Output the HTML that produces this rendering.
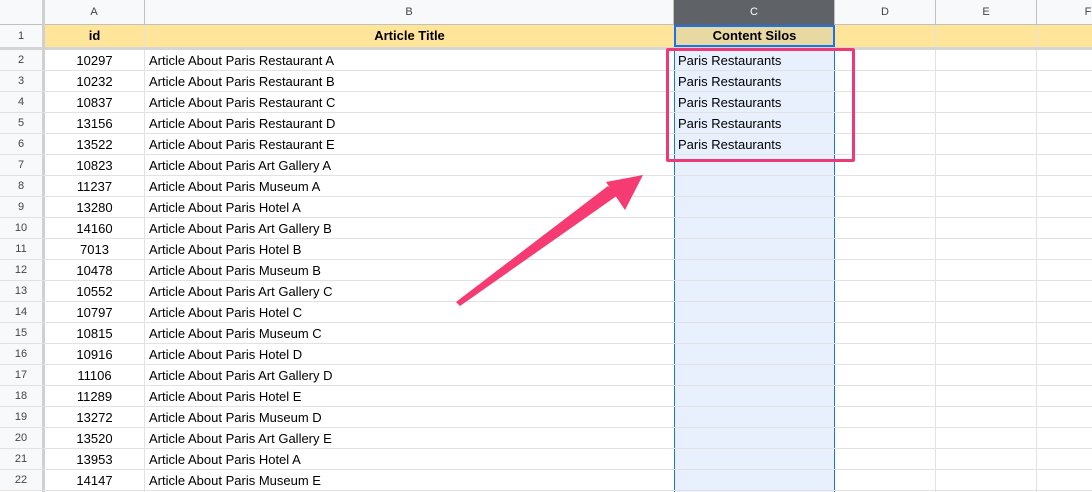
<!DOCTYPE html><html><head><style>
body{margin:0;width:1092px;height:492px;overflow:hidden;background:#fff;font-family:"Liberation Sans",Arial,sans-serif;position:relative}
.a{position:absolute;box-sizing:border-box}
.t{font-size:13px;color:#000;line-height:21px;white-space:nowrap}
.rh{font-size:11px;color:#444;text-align:center}
</style></head><body>
<div class="a" style="left:0;top:0;width:1092px;height:25px;background:#f8f9fa;border-bottom:1px solid #c0c0c0"></div>
<div class="a" style="left:674px;top:0;width:161px;height:25px;background:#5f6368"></div>
<div id="g"></div>
<script>
var h='';
var cols=[[44,145,'A'],[145,674,'B'],[674,835,'C'],[835,936,'D'],[936,1037,'E'],[1037,1140,'F']];
cols.forEach(function(c){h+='<div class="a rh" style="left:'+c[0]+'px;top:0;width:'+(c[1]-c[0])+'px;height:25px;line-height:25px;border-right:1px solid #c0c0c0;'+(c[2]=='C'?'color:#fff':'')+'">'+c[2]+'</div>';});
h+='<div class="a" style="left:44px;top:25px;width:1048px;height:22px;background:#ffe599"></div>';
h+='<div class="a" style="left:674px;top:25px;width:161px;height:22px;background:#e8d9a2;border:2px solid #1a73e8"></div>';
h+='<div class="a" style="left:0;top:25px;width:42px;height:22px;background:#f8f9fa"></div>';
h+='<div class="a rh" style="left:0;top:25px;width:42px;line-height:22px">1</div>';
[[44,145,'id'],[145,674,'Article Title'],[674,835,'Content Silos']].forEach(function(c){h+='<div class="a t" style="left:'+c[0]+'px;top:25px;width:'+(c[1]-c[0])+'px;line-height:22px;text-align:center;font-weight:bold">'+c[2]+'</div>';});
[145,936,1037].forEach(function(x){h+='<div class="a" style="left:'+(x-1)+'px;top:25px;width:1px;height:467px;background:#e2e2e2"></div>';});
h+='<div class="a" style="left:0;top:47px;width:1092px;height:3px;background:#d5d5d5"></div>';
h+='<div class="a" style="left:42px;top:0;width:3px;height:492px;background:#d0d0d0"></div>';
h+='<div class="a" style="left:674px;top:50px;width:161px;height:442px;background:#e8f0fe;border-left:1px solid #1a73e8;border-right:1px solid #1a73e8"></div>';
var d=[['10297','Restaurant A'],['10232','Restaurant B'],['10837','Restaurant C'],['13156','Restaurant D'],['13522','Restaurant E'],['10823','Art Gallery A'],['11237','Museum A'],['13280','Hotel A'],['14160','Art Gallery B'],['7013','Hotel B'],['10478','Museum B'],['10552','Art Gallery C'],['10797','Hotel C'],['10815','Museum C'],['10916','Hotel D'],['11106','Art Gallery D'],['11289','Hotel E'],['13272','Museum D'],['13520','Art Gallery E'],['13953','Hotel A'],['14147','Museum E']];
d.forEach(function(r,i){var y=50+i*21;
h+='<div class="a" style="left:0;top:'+y+'px;width:42px;height:21px;background:#f8f9fa"></div>';
h+='<div class="a rh" style="left:0;top:'+y+'px;width:42px;line-height:21px">'+(i+2)+'</div>';
h+='<div class="a" style="left:0;top:'+(y+20)+'px;width:1092px;height:1px;background:#e2e2e2"></div>';
h+='<div class="a t" style="left:44px;top:'+y+'px;width:101px;text-align:center">'+r[0]+'</div>';
h+='<div class="a t" style="left:149px;top:'+y+'px">Article About Paris '+r[1]+'</div>';
if(i<5)h+='<div class="a t" style="left:678px;top:'+y+'px">Paris Restaurants</div>';
});
document.getElementById('g').outerHTML=h;
</script>
<div class="a" style="left:666px;top:48px;width:189px;height:114px;border:3px solid #ee3a74;border-radius:2px"></div>
<svg class="a" style="left:0;top:0" width="1092" height="492">
<polygon points="456,302 460,306 618,195 608,186" fill="#f53b72"/>
<polygon points="643,175 606,182 625,210" fill="#f53b72"/>
</svg>
</body></html>
